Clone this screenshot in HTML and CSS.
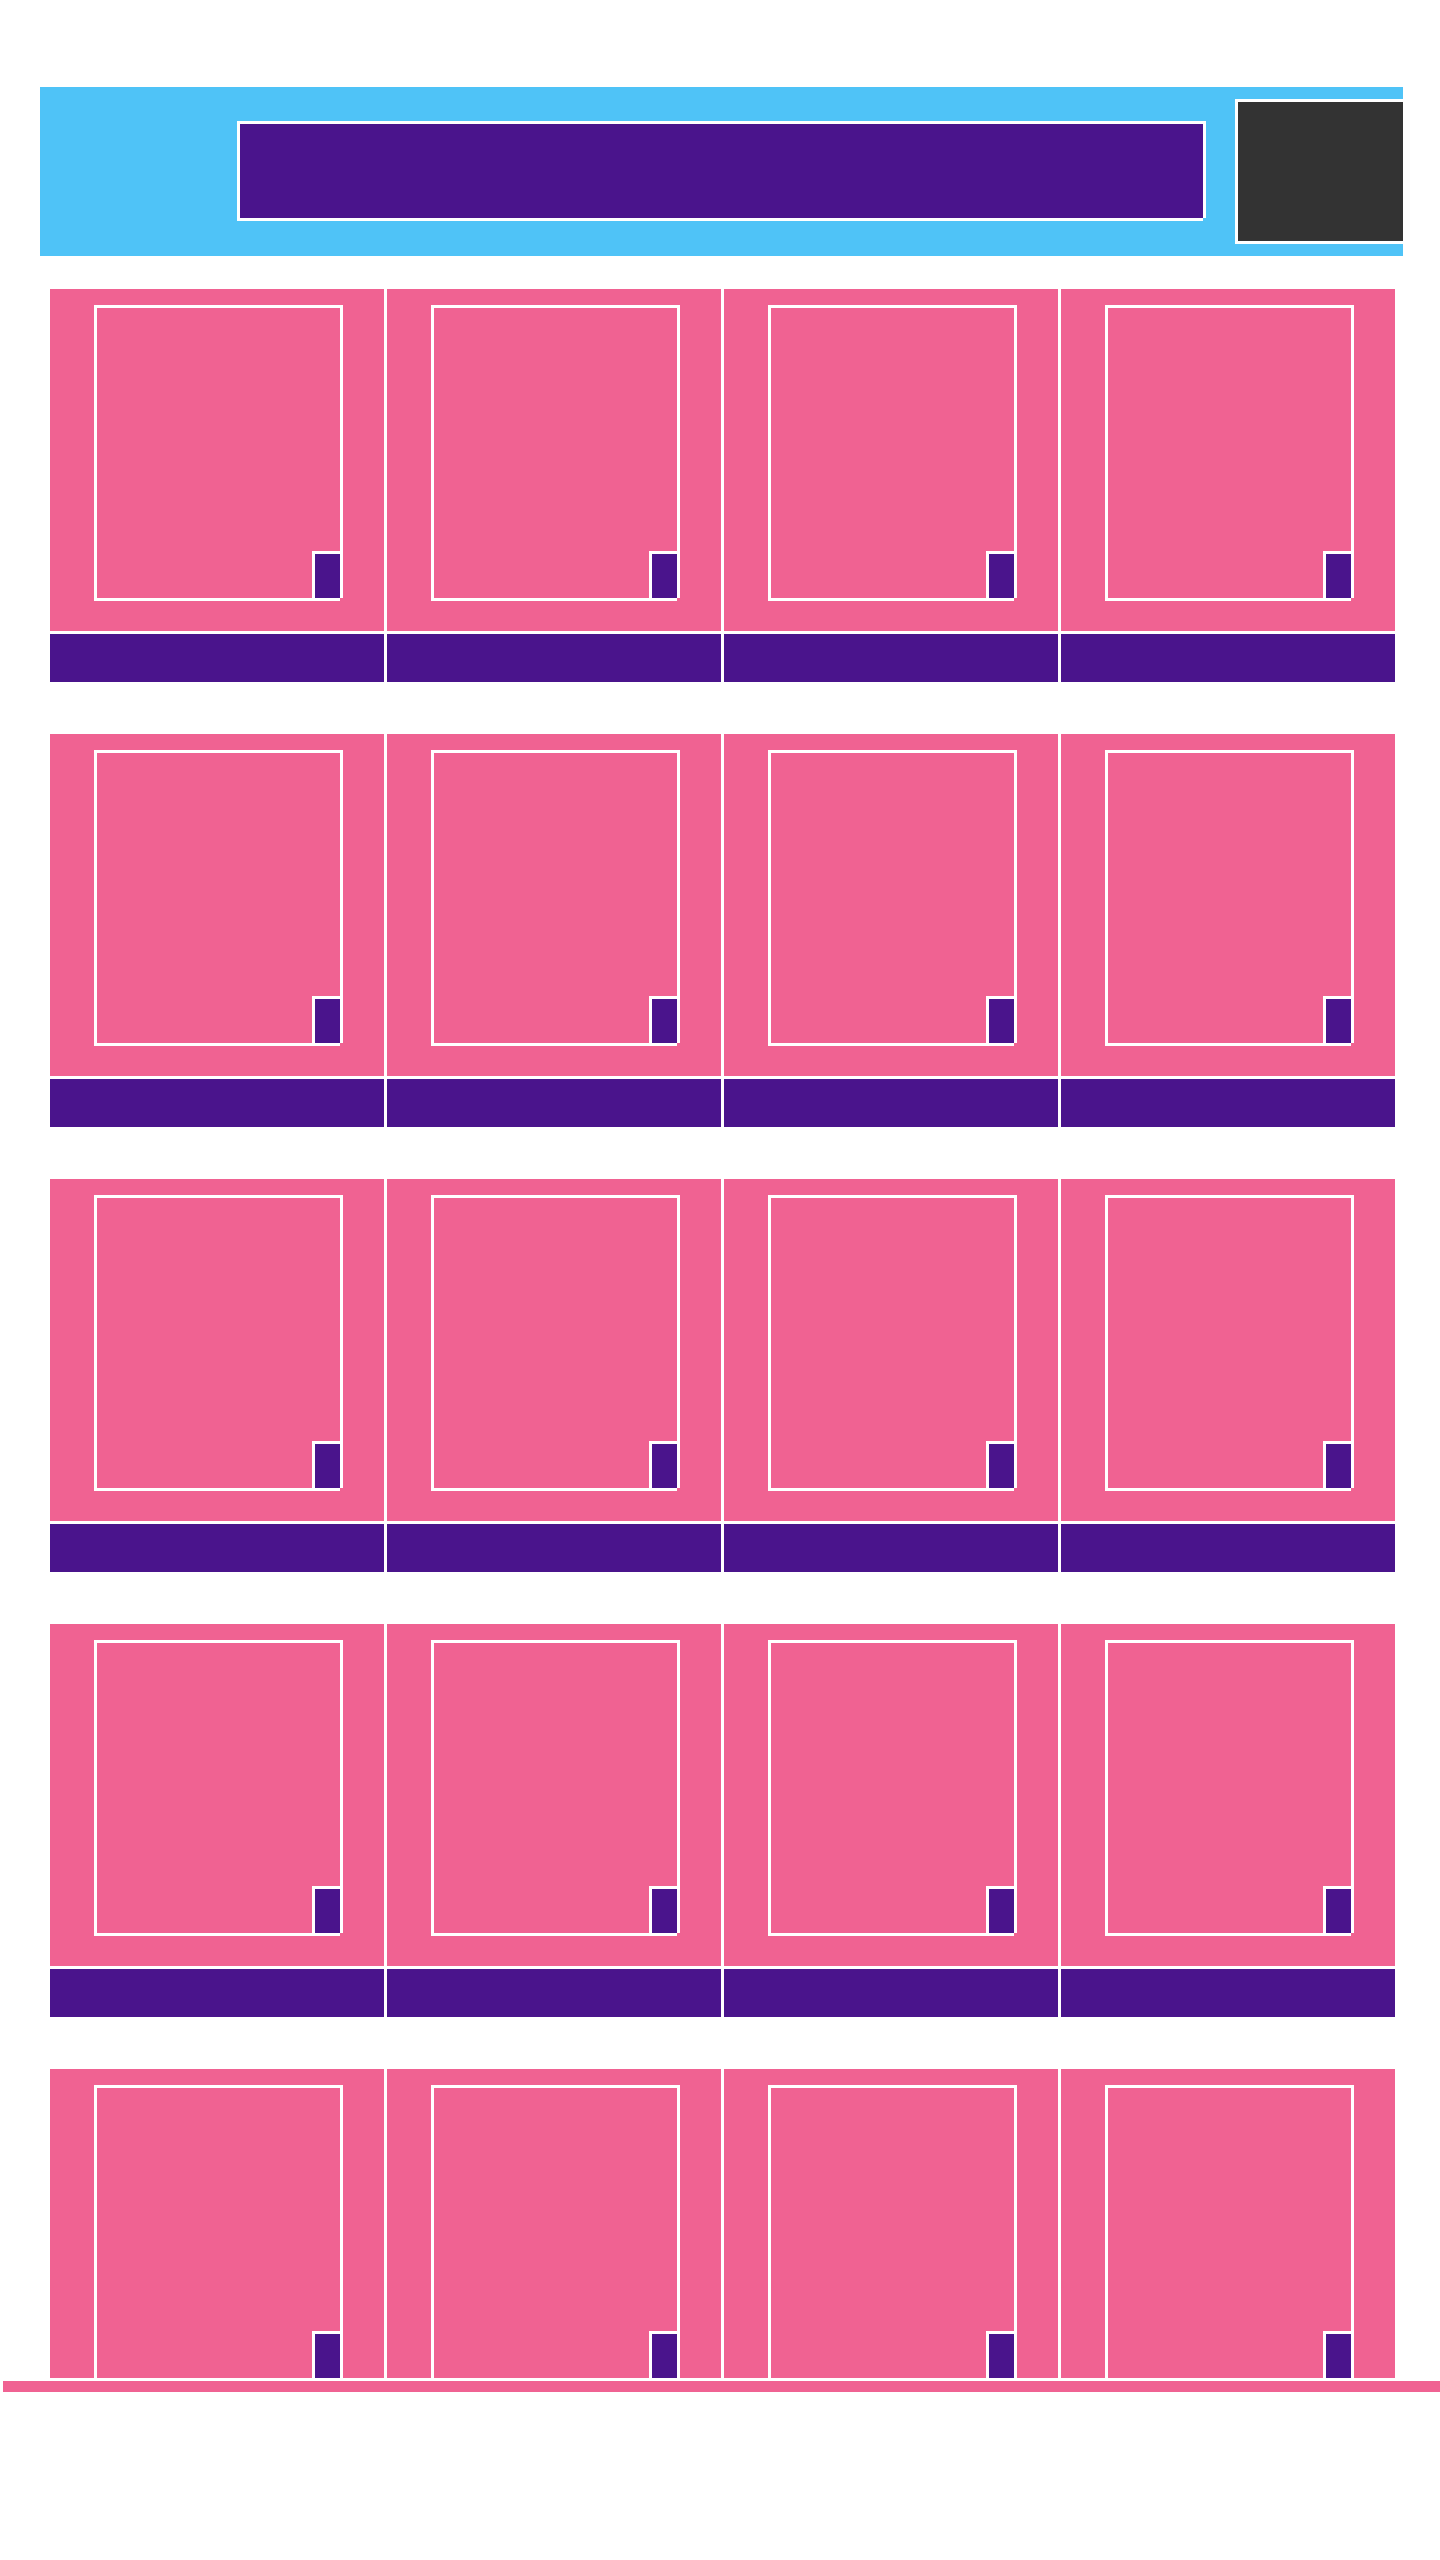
FILE: index.html
```html
<!DOCTYPE html>
<html>

<head>
  <title>Gallery</title>
  <link rel="stylesheet" href="styles.css">
</head>

<body>
  <header class="topbar">
    <div class="search"></div>
    <div class="account"></div>
  </header>

  <main class="gallery">
    <section class="row">
      <article class="card"><div class="thumb"><div class="frame"><span class="badge"></span></div></div><div class="caption"></div></article>
      <article class="card"><div class="thumb"><div class="frame"><span class="badge"></span></div></div><div class="caption"></div></article>
      <article class="card"><div class="thumb"><div class="frame"><span class="badge"></span></div></div><div class="caption"></div></article>
      <article class="card"><div class="thumb"><div class="frame"><span class="badge"></span></div></div><div class="caption"></div></article>
    </section>
    <section class="row">
      <article class="card"><div class="thumb"><div class="frame"><span class="badge"></span></div></div><div class="caption"></div></article>
      <article class="card"><div class="thumb"><div class="frame"><span class="badge"></span></div></div><div class="caption"></div></article>
      <article class="card"><div class="thumb"><div class="frame"><span class="badge"></span></div></div><div class="caption"></div></article>
      <article class="card"><div class="thumb"><div class="frame"><span class="badge"></span></div></div><div class="caption"></div></article>
    </section>
    <section class="row">
      <article class="card"><div class="thumb"><div class="frame"><span class="badge"></span></div></div><div class="caption"></div></article>
      <article class="card"><div class="thumb"><div class="frame"><span class="badge"></span></div></div><div class="caption"></div></article>
      <article class="card"><div class="thumb"><div class="frame"><span class="badge"></span></div></div><div class="caption"></div></article>
      <article class="card"><div class="thumb"><div class="frame"><span class="badge"></span></div></div><div class="caption"></div></article>
    </section>
    <section class="row">
      <article class="card"><div class="thumb"><div class="frame"><span class="badge"></span></div></div><div class="caption"></div></article>
      <article class="card"><div class="thumb"><div class="frame"><span class="badge"></span></div></div><div class="caption"></div></article>
      <article class="card"><div class="thumb"><div class="frame"><span class="badge"></span></div></div><div class="caption"></div></article>
      <article class="card"><div class="thumb"><div class="frame"><span class="badge"></span></div></div><div class="caption"></div></article>
    </section>
    <section class="row">
      <article class="card"><div class="thumb"><div class="frame"><span class="badge"></span></div></div><div class="caption"></div></article>
      <article class="card"><div class="thumb"><div class="frame"><span class="badge"></span></div></div><div class="caption"></div></article>
      <article class="card"><div class="thumb"><div class="frame"><span class="badge"></span></div></div><div class="caption"></div></article>
      <article class="card"><div class="thumb"><div class="frame"><span class="badge"></span></div></div><div class="caption"></div></article>
    </section>
  </main>

  <div class="scroll-bar"></div>
</body>

</html>
```

FILE: styles.css
```css
body {
  margin: 0;
  background-color: #fff;
  font-family: "Liberation Sans", Arial, sans-serif;
}

/* top bar with the search field and the account box */
.topbar {
  display: flex;
  box-sizing: border-box;
  width: 1363px;
  height: 169px;
  margin: 87px 0 0 40px;
  padding-left: 197px;
  background-color: #4fc3f7;
  overflow: hidden;
}

.search {
  flex: 0 0 966px;
  box-sizing: border-box;
  height: 97px;
  margin-top: 34px;
  background-color: #4a148c;
  border-top: 3px solid #fff;
  border-left: 3px solid #fff;
  box-shadow: 3px 0 0 #fff, 0 3px 0 #fff;
}

.account {
  flex: 0 0 300px;
  box-sizing: border-box;
  height: 145px;
  margin: 12px 0 0 32px;
  background-color: #333;
  border: 3px solid #fff;
}

/* the grid of cards, cut off at the bottom */
.gallery {
  width: 1345px;
  height: 2089px;
  margin: 33px 0 0 50px;
  overflow: hidden;
}

.row {
  display: grid;
  grid-template-columns: repeat(4, 334px);
  gap: 3px;
  margin-bottom: 52px;
}

.card {
  display: flex;
  flex-direction: column;
  gap: 3px;
}

.thumb {
  box-sizing: border-box;
  height: 342px;
  padding: 16px 0 0 44px;
  background-color: #f06292;
}

/* white frame: the bottom-right corner stays open */
.frame {
  position: relative;
  box-sizing: border-box;
  width: 246px;
  height: 293px;
  border-top: 3px solid #fff;
  border-left: 3px solid #fff;
  box-shadow: 3px 0 0 #fff, 0 3px 0 #fff;
}

.badge {
  position: absolute;
  right: 0;
  bottom: 0;
  box-sizing: border-box;
  width: 28px;
  height: 47px;
  background-color: #4a148c;
  border-top: 3px solid #fff;
  border-left: 3px solid #fff;
}

.caption {
  height: 48px;
  background-color: #4a148c;
}

.scroll-bar {
  height: 11px;
  margin: 3px 0 0 3px;
  background-color: #f06292;
}
```
